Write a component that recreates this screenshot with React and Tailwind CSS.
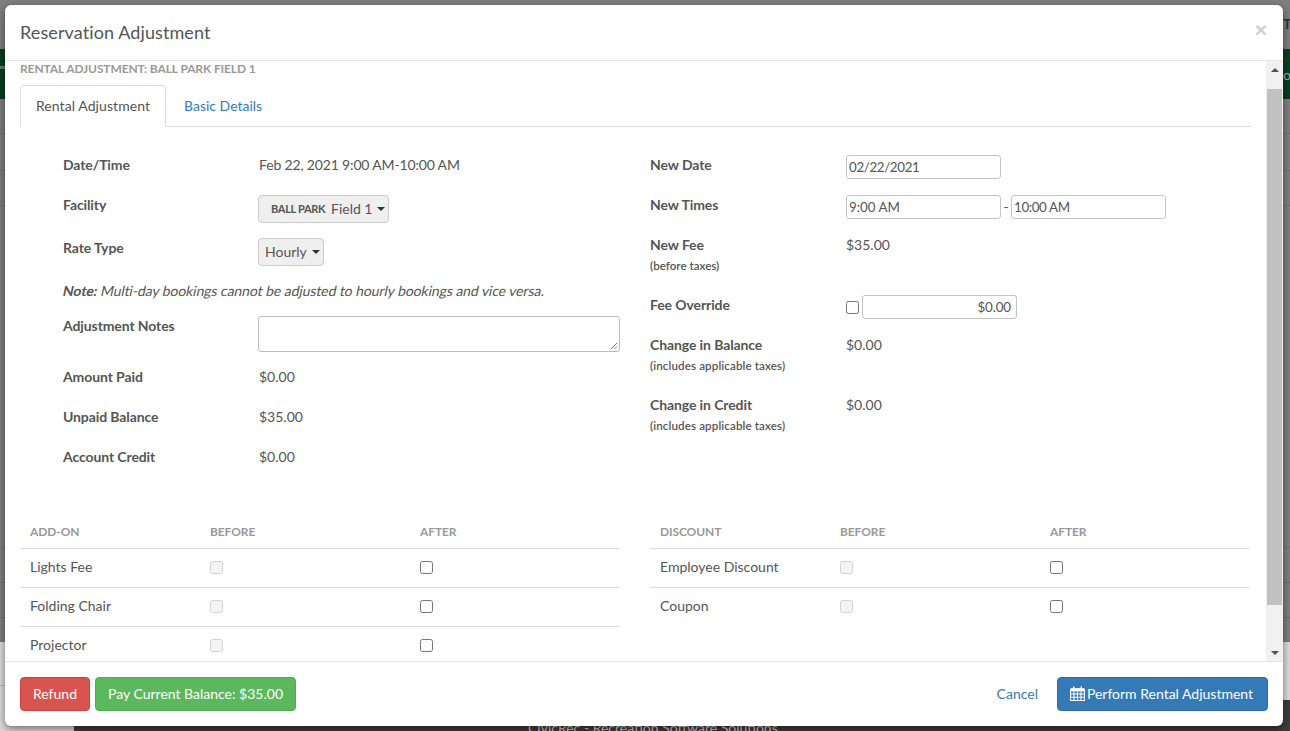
const Chk = ({ disabled }) => (
  <span className={disabled ? "block w-[13px] h-[13px] rounded-[2.5px] border border-[#d4d4d4] bg-[#f4f4f4]" : "block w-[13px] h-[13px] rounded-[2.5px] border border-[#767676] bg-white"} />
);

const Info = ({ label, sub, subClass = "", children, className = "" }) => (
  <div className={"flex " + className}>
    <div className="w-[196px] shrink-0">
      <div className="font-bold text-[14px] leading-[20px] tracking-[-0.1px] text-[#555555]">{label}</div>
      {sub && <div className={"font-semibold text-[11.6px] leading-[21px] text-[#555555] " + subClass}>{sub}</div>}
    </div>
    <div className="text-[14px] leading-[20px] text-[#555555]">{children}</div>
  </div>
);

const Input = ({ children, right, tight }) => (
  <div className={"w-[155px] h-[24px] border border-[#c4c4c4] rounded-[3px] bg-white px-[2px] text-[13.33px] leading-[22px] text-[#555555] " + (right ? "text-right pr-[5px] tracking-[-0.1px]" : "") + (tight ? " tracking-[-0.35px]" : "")}>{children}</div>
);

const Caret = () => <span className="inline-block w-0 h-0 border-x-[4px] border-x-transparent border-t-[4px] border-t-[#333333]" />;

const Table = ({ title, rows }) => (
  <div className="w-[600px]">
    <div className="flex h-[34px] items-center border-b border-[#dddddd] text-[12px] tracking-[-0.1px] font-bold text-[#999999]">
      <div className="w-[190px] pl-[10px]">{title}</div>
      <div className="w-[210px]">BEFORE</div>
      <div>AFTER</div>
    </div>
    {rows.map((r, i) => (
      <div key={r} className={"flex h-[39px] items-center text-[14px] text-[#555555] border-b " + (i < rows.length - 1 || title === "ADD-ON" ? "border-[#dddddd]" : "border-transparent")}>
        <div className="w-[190px] pl-[10px] pb-[3px]">{r}</div>
        <div className="w-[210px] pb-[2px]"><Chk disabled /></div>
        <div className="pb-[2px]"><Chk /></div>
      </div>
    ))}
  </div>
);

export default function App() {
  return (
    <div className="relative h-[731px] w-[1290px] overflow-hidden bg-[#7f7f7f] font-['Lato','Noto_Sans',sans-serif]">
      {/* dimmed page behind the dialog */}
      <div className="absolute left-0 right-0 top-[49px] h-[50px] bg-[#0b3d22]" />
      <div className="absolute left-0 w-[5px] top-[66px] h-[3px] bg-[#5f7f6a]" />
      <div className="absolute left-0 right-0 top-[133px] h-px bg-[#6f6f6f]" />
      <div className="absolute left-0 right-0 top-[170px] h-px bg-[#6f6f6f]" />
      <div className="absolute left-0 right-0 top-[205px] h-px bg-[#6f6f6f]" />
      <div className="absolute left-0 right-0 top-[547px] h-px bg-[#6f6f6f]" />
      <div className="absolute left-0 right-0 top-[582px] h-px bg-[#6f6f6f]" />
      <div className="absolute left-0 right-0 top-[617px] h-px bg-[#6f6f6f]" />
      <div className="absolute left-[-10px] top-[445px] text-[14px] text-[#3a3a3a]">al</div>
      <div className="absolute left-[1283px] top-[13px] text-[14px] font-bold text-[#333333]">TE</div>
      <div className="absolute left-[1283px] top-[64px] text-[14px] text-[#9fb3a8]">or</div>
      <div className="absolute left-0 right-0 top-[642px] bottom-0 bg-[#dcdcdc]" />
      <div className="absolute left-0 w-[5px] top-[685px] h-px bg-[#b5b5b5]" />
      <div className="absolute left-[74px] right-0 top-[700px] bottom-0 bg-[#3d3d3d]">
        <div className="absolute left-[454px] top-[18px] text-[14px] leading-[20px] text-[#d0d0d0]">CivicRec - Recreation Software Solutions</div>
      </div>

      {/* dialog */}
      <div className="absolute left-[5px] top-[5px] w-[1278px] h-[721px] rounded-[6px] bg-white shadow-[0_3px_9px_rgba(0,0,0,0.5)] flex flex-col overflow-hidden">
        <div className="h-[56px] shrink-0 border-b border-[#e5e5e5] flex items-start justify-between pl-[15px] pr-[16px]">
          <h4 className="text-[18px] tracking-[0.1px] leading-[25.7px] mt-[15px] text-[#555555]">Reservation Adjustment</h4>
          <span className="mt-[14px] text-[21px] leading-[21px] font-bold text-[#d0d0d0] font-['Liberation_Sans']">×</span>
        </div>

        <div className="flex-1 min-h-0 flex overflow-hidden">
          <div className="flex-1 min-w-0 overflow-hidden pl-[15px] pr-[15px]">
            <div className="text-[12px] leading-[15px] tracking-[-0.11px] font-bold text-[#999999]">RENTAL ADJUSTMENT: BALL PARK FIELD 1</div>
            <div className="flex h-[42px] mt-[9px] border-b border-[#dddddd] text-[14px]">
              <div className="h-[42px] w-[146px] pb-[2px] flex items-center justify-center tracking-[0.08px] border border-[#dddddd] border-b-white rounded-t-[4px] bg-white text-[#555555]">Rental Adjustment</div>
              <div className="h-[41px] pl-[18px] flex items-center text-[#337ab7]">Basic Details</div>
            </div>

            <div className="flex mt-[28px]">
              <div className="w-[630px] pl-[43px] shrink-0">
                <Info label="Date/Time"><span className="tracking-[-0.16px]">Feb 22, 2021 9:00 AM-10:00 AM</span></Info>
                <Info label="Facility" className="mt-[20px]">
                  <div className="h-[28px] w-[131px] -ml-px border border-[#cccccc] rounded-[4px] bg-[#efefef] flex items-center pl-[12px]">
                    <span className="text-[11px] tracking-[-0.3px] font-bold w-[60px] shrink-0">BALL PARK</span>
                    <span className="w-[46px] shrink-0">Field 1</span>
                    <Caret />
                  </div>
                </Info>
                <Info label="Rate Type" className="mt-[15px]">
                  <div className="h-[28px] w-[66px] -ml-px border border-[#cccccc] rounded-[4px] bg-[#efefef] flex items-center pl-[6px] gap-[5px]">
                    <span>Hourly</span>
                    <Caret />
                  </div>
                </Info>
                <p className="text-[14px] leading-[20px] tracking-[-0.075px] text-[#555555] -ml-[2px] mt-[15px] mb-[15px] inline-block origin-bottom-left -skew-x-12 whitespace-nowrap"><b className="font-bold">Note:</b> Multi-day bookings cannot be adjusted to hourly bookings and vice versa.</p>
                <Info label="Adjustment Notes">
                  <div className="relative h-[36px] w-[362px] -ml-px border border-[#bdbdbd] rounded-[3px] bg-white">
                    <svg className="absolute right-[1px] bottom-[1px]" width="8" height="8" viewBox="0 0 8 8"><path d="M1 7L7 1M4.5 7L7 4.5" stroke="#777777" strokeWidth="1" /></svg>
                  </div>
                </Info>
                <Info label="Amount Paid" className="mt-[15px]">$0.00</Info>
                <Info label="Unpaid Balance" className="mt-[20px]">$35.00</Info>
                <Info label="Account Credit" className="mt-[20px]">$0.00</Info>
              </div>
              <div className="flex-1">
                <Info label="New Date"><Input tight>02/22/2021</Input></Info>
                <Info label="New Times" className="mt-[16px]">
                  <div className="flex items-center">
                    <Input>9:00 AM</Input>
                    <span className="w-[10px] text-center">-</span>
                    <Input tight>10:00 AM</Input>
                  </div>
                </Info>
                <Info label="New Fee" sub="(before taxes)" className="mt-[16px]">$35.00</Info>
                <Info label="Fee Override" className="mt-[19px]">
                  <div className="flex items-center gap-[3px]">
                    <Chk />
                    <Input right>$0.00</Input>
                  </div>
                </Info>
                <Info label="Change in Balance" sub="(includes applicable taxes)" subClass="tracking-[0.11px]" className="mt-[16px]">$0.00</Info>
                <Info label="Change in Credit" sub="(includes applicable taxes)" subClass="tracking-[0.11px]" className="mt-[19px]">$0.00</Info>
              </div>
            </div>

            <div className="flex gap-[30px] mt-[48px]">
              <Table title="ADD-ON" rows={["Lights Fee", "Folding Chair", "Projector"]} />
              <Table title="DISCOUNT" rows={["Employee Discount", "Coupon"]} />
            </div>
          </div>

          <div className="w-[17px] shrink-0 bg-[#f1f1f1] flex flex-col items-center">
            <div className="h-[17px] shrink-0 flex items-center justify-center">
              <span className="w-0 h-0 border-x-[4px] border-x-transparent border-b-[4px] border-b-[#505050]" />
            </div>
            <div className="h-[11px] shrink-0" />
            <div className="w-[15px] h-[516px] shrink-0 bg-[#c1c1c1]" />
            <div className="flex-1" />
            <div className="h-[17px] shrink-0 flex items-center justify-center">
              <span className="w-0 h-0 border-x-[4px] border-x-transparent border-t-[4px] border-t-[#505050]" />
            </div>
          </div>
        </div>

        <div className="h-[65px] shrink-0 border-t border-[#e5e5e5] flex items-center justify-between px-[15px] text-[14px]">
          <div className="flex gap-[5px]">
            <div className="h-[34px] w-[70px] pb-[2px] flex items-center justify-center rounded-[4px] border border-[#d43f3a] bg-[#d9534f] text-white">Refund</div>
            <div className="h-[34px] w-[201px] pb-[2px] flex items-center justify-center rounded-[4px] border border-[#4cae4c] bg-[#5cb85c] text-white">Pay Current Balance: $35.00</div>
          </div>
          <div className="flex items-center gap-[19px]">
            <span className="text-[#337ab7] pb-[1px]">Cancel</span>
            <div className="h-[34px] w-[211px] pb-[1px] pr-[2px] flex items-center justify-center gap-[2px] rounded-[4px] border border-[#2e6da4] bg-[#337ab7] text-white">
              <svg width="15" height="15" viewBox="0 0 14 14" fill="none" stroke="white">
                <path d="M0.5 3.5h13v10h-13z" fill="none" />
                <path d="M0.5 2h13v3h-13z" fill="white" stroke="none" />
                <path d="M3.5 0.5v2.5M10.5 0.5v2.5" strokeWidth="1.4" />
                <path d="M0.5 7.5h13M0.5 10.5h13M3.7 5v8.5M7 5v8.5M10.3 5v8.5" strokeWidth="1" />
              </svg>
              <span className="pb-[1px]">Perform Rental Adjustment</span>
            </div>
          </div>
        </div>
      </div>
    </div>
  );
}
